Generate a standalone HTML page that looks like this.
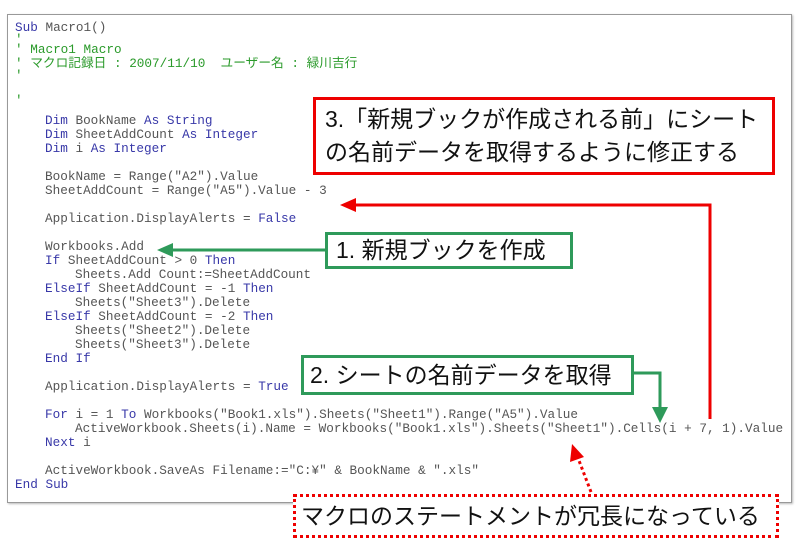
<!DOCTYPE html>
<html><head><meta charset="utf-8"><style>
body{margin:0;width:800px;height:550px;background:#fff;position:relative;overflow:hidden}
.panel{position:absolute;left:7px;top:14px;width:783px;height:487px;border:1px solid #999;box-shadow:1px 1px 2px #bbb;background:#fff}
.c{position:absolute;font-family:"Liberation Mono","Noto Sans CJK JP",monospace;font-size:12.7px;color:#555;white-space:pre;line-height:12px}
.k{color:#3838a8}.g{color:#2a9a2a}
.lb{position:absolute;background:#fff;font-family:"Liberation Sans","Noto Sans CJK JP",sans-serif;color:#111;white-space:nowrap;box-sizing:border-box}
</style></head><body>
<div class="panel"></div>
<div class="c" style="left:15px;top:22px"><span class="k">Sub</span> Macro1()</div>
<div class="c g" style="left:15px;top:34px">'</div>
<div class="c g" style="left:15px;top:44px">' Macro1 Macro</div>
<div class="c g" style="left:15px;top:58px">' マクロ記録日 : 2007/11/10  ユーザー名 : 緑川吉行</div>
<div class="c g" style="left:15px;top:70px">'</div>
<div class="c g" style="left:15px;top:95px">'</div>
<div class="c" style="left:45px;top:115px"><span class="k">Dim</span> BookName <span class="k">As String</span></div>
<div class="c" style="left:45px;top:129px"><span class="k">Dim</span> SheetAddCount <span class="k">As Integer</span></div>
<div class="c" style="left:45px;top:143px"><span class="k">Dim</span> i <span class="k">As Integer</span></div>
<div class="c" style="left:45px;top:171px">BookName = Range("A2").Value</div>
<div class="c" style="left:45px;top:185px">SheetAddCount = Range("A5").Value - 3</div>
<div class="c" style="left:45px;top:213px">Application.DisplayAlerts = <span class="k">False</span></div>
<div class="c" style="left:45px;top:241px">Workbooks.Add</div>
<div class="c" style="left:45px;top:255px"><span class="k">If</span> SheetAddCount &gt; 0 <span class="k">Then</span></div>
<div class="c" style="left:75px;top:269px">Sheets.Add Count:=SheetAddCount</div>
<div class="c" style="left:45px;top:283px"><span class="k">ElseIf</span> SheetAddCount = -1 <span class="k">Then</span></div>
<div class="c" style="left:75px;top:297px">Sheets("Sheet3").Delete</div>
<div class="c" style="left:45px;top:311px"><span class="k">ElseIf</span> SheetAddCount = -2 <span class="k">Then</span></div>
<div class="c" style="left:75px;top:325px">Sheets("Sheet2").Delete</div>
<div class="c" style="left:75px;top:339px">Sheets("Sheet3").Delete</div>
<div class="c" style="left:45px;top:353px"><span class="k">End If</span></div>
<div class="c" style="left:45px;top:381px">Application.DisplayAlerts = <span class="k">True</span></div>
<div class="c" style="left:45px;top:409px"><span class="k">For</span> i = 1 <span class="k">To</span> Workbooks("Book1.xls").Sheets("Sheet1").Range("A5").Value</div>
<div class="c" style="left:75px;top:423px">ActiveWorkbook.Sheets(i).Name = Workbooks("Book1.xls").Sheets("Sheet1").Cells(i + 7, 1).Value</div>
<div class="c" style="left:45px;top:437px"><span class="k">Next</span> i</div>
<div class="c" style="left:45px;top:465px">ActiveWorkbook.SaveAs Filename:="C:¥" &amp; BookName &amp; ".xls"</div>
<div class="c" style="left:15px;top:479px"><span class="k">End Sub</span></div>

<svg style="position:absolute;left:0;top:0" width="800" height="550">
<polyline points="710,419 710,205 352,205" fill="none" stroke="#e00" stroke-width="3"/>
<polygon points="340,205 356,198 356,212" fill="#e00"/>
<line x1="170" y1="250" x2="326" y2="250" stroke="#2e9a5a" stroke-width="3"/>
<polygon points="157,250 173,243 173,257" fill="#2e9a5a"/>
<polyline points="633,373 660,373 660,410" fill="none" stroke="#2e9a5a" stroke-width="3"/>
<polygon points="660,423 652,407 668,407" fill="#2e9a5a"/>
<line x1="591" y1="492" x2="578" y2="458" stroke="#e00" stroke-width="3" stroke-dasharray="3,3"/>
<polygon points="572,444 570,462 584,457" fill="#e00"/>
</svg>

<div class="lb" style="left:313px;top:97px;width:462px;height:78px;border:3px solid #e00;font-size:23px;line-height:33px;padding:3px 0 0 9px">3.「新規ブックが作成される前」にシート<br>の名前データを取得するように修正する</div>
<div class="lb" style="left:325px;top:232px;width:248px;height:37px;border:3px solid #2e9a5a;font-size:23px;line-height:31px;padding-left:8px">1. 新規ブックを作成</div>
<div class="lb" style="left:301px;top:355px;width:333px;height:40px;border:3px solid #2e9a5a;font-size:23px;line-height:34px;padding-left:6px">2. シートの名前データを取得</div>
<div class="lb" style="left:293px;top:494px;width:486px;height:44px;border:3px dotted #e00;font-size:23px;line-height:38px;padding-left:5px">マクロのステートメントが冗長になっている</div>
</body></html>
